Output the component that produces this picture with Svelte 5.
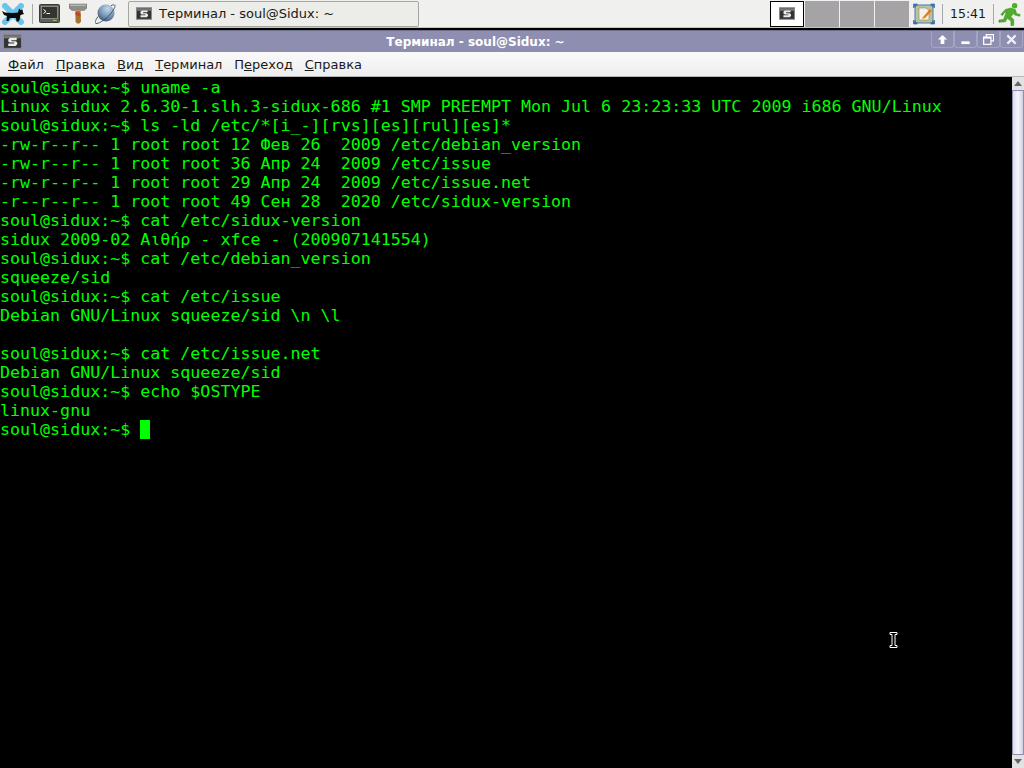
<script lang="ts">
  const menus = [
    { key: "Ф", rest: "айл" },
    { key: "П", rest: "равка" },
    { key: "В", rest: "ид" },
    { key: "Т", rest: "ерминал" },
    { pre: "П", key: "е", rest: "реход" },
    { key: "С", rest: "правка" },
  ];

  const lines = [
    "soul@sidux:~$ uname -a",
    "Linux sidux 2.6.30-1.slh.3-sidux-686 #1 SMP PREEMPT Mon Jul 6 23:23:33 UTC 2009 i686 GNU/Linux",
    "soul@sidux:~$ ls -ld /etc/*[i_-][rvs][es][rul][es]*",
    "-rw-r--r-- 1 root root 12 Фев 26  2009 /etc/debian_version",
    "-rw-r--r-- 1 root root 36 Апр 24  2009 /etc/issue",
    "-rw-r--r-- 1 root root 29 Апр 24  2009 /etc/issue.net",
    "-r--r--r-- 1 root root 49 Сен 28  2020 /etc/sidux-version",
    "soul@sidux:~$ cat /etc/sidux-version",
    "sidux 2009-02 Αιθήρ - xfce - (200907141554)",
    "soul@sidux:~$ cat /etc/debian_version",
    "squeeze/sid",
    "soul@sidux:~$ cat /etc/issue",
    "Debian GNU/Linux squeeze/sid \\n \\l",
    "",
    "soul@sidux:~$ cat /etc/issue.net",
    "Debian GNU/Linux squeeze/sid",
    "soul@sidux:~$ echo $OSTYPE",
    "linux-gnu",
  ];
</script>

{#snippet appIcon(cls)}
  <svg class={cls} viewBox="0 0 18 14">
    <rect x="0.5" y="0.5" width="17" height="13" fill="#333" stroke="#8a8a8a" />
    <rect x="1" y="1" width="16" height="3" fill="#777" />
    <path d="M13 3.500H6.500L5 5V7l1.500 1H10.500V9H5v2.200h7l1.500-1.500V8L12 6.800H8V5.700h5z" fill="#ececec" />
  </svg>
{/snippet}

<div class="desktop">
  <header class="panel">
    <div class="launchers">
      <svg class="logo" viewBox="0 0 22 22">
        <path d="M3 3l16 16M19 3L3 19" stroke="#6cc4ee" stroke-width="6" stroke-linecap="round" />
        <path d="M0 8l3 1.500 8 .5 5-.5 1-4 1.500 1.500 2-.5.500 3 1 1.500-3.500 1-1 5-1 1.500h-2l-.5-3.500H8L6.500 18H4.500L5 13l-3-1z" fill="#0a0a0a" />
      </svg>
      <span class="sep"></span>
      <svg class="ico term-ico" viewBox="0 0 21 21">
        <rect x="0.500" y="1.500" width="20" height="18" rx="1" fill="#5d605c" stroke="#3a3b38" />
        <rect x="2.500" y="3.500" width="16" height="12" fill="#33352f" stroke="#a6a8a2" stroke-width="0.700" />
        <path d="M4.500 6.500l2.500 2-2.500 2" stroke="#fff" fill="none" />
        <rect x="7.500" y="10" width="3.500" height="1" fill="#fff" />
        <rect x="14" y="17" width="3.500" height="1" fill="#8ecb4a" />
      </svg>
      <svg class="ico hammer" viewBox="0 0 18 21">
        <path d="M0 1h18v4l-3 2.500h-3.500L11 7H7l-.5.5H3L0 5z" fill="#8e8e8a" stroke="#6a6a66" stroke-width="0.500" />
        <path d="M1 1.700h16v1H1z" fill="#c8c8c4" />
        <path d="M6.500 7.500h5l.5 11-1.500 2h-2.500l-1.500-2z" fill="#a8722e" />
        <path d="M6.500 9l5 1.500v3l-5-1.500z" fill="#c8402c" />
      </svg>
      <svg class="ico planet" viewBox="0 0 21 21">
        <defs>
          <radialGradient id="pl" cx="0.6" cy="0.25" r="0.85">
            <stop offset="0" stop-color="#c6d8e8" />
            <stop offset="0.55" stop-color="#7596b8" />
            <stop offset="1" stop-color="#34485e" />
          </radialGradient>
        </defs>
        <circle cx="11" cy="10" r="8.500" fill="url(#pl)" />
        <path d="M3 13.500C0 18-.5 20 1 20.500c2 .5 8-3 12-7s7.500-9 7-11c-.3-1-2-1-4 .2" fill="none" stroke="#3c4a58" stroke-width="0.900" />
      </svg>
    </div>

    <div class="task">
      {@render appIcon("task-icon")}
      <span>Терминал - soul@Sidux: ~</span>
    </div>

    <div class="tray">
      <div class="pager">
        <div class="desk active">{@render appIcon("pager-icon")}</div>
        <div class="desk"></div>
        <div class="desk"></div>
        <div class="desk"></div>
      </div>
      <svg class="notes" viewBox="0 0 22 22">
        <rect x="2" y="2" width="18" height="18" rx="3" fill="#b9c39a" stroke="#4a78b0" />
        <path d="M0.500 5V1h4zM21.500 5V1h-4zM0.500 17v4h4zM21.500 17v4h-4z" fill="#3f78b8" stroke="#2a5a98" stroke-width="0.600" />
        <path d="M6 5h7l3 3v9H6z" fill="#f4f2e6" stroke="#777" stroke-width="0.500" />
        <path d="M10 14l7-8 2 2-7 7-3 1z" fill="#ee7d10" />
      </svg>
      <span class="sep"></span>
      <span class="clock">15:41</span>
      <span class="sep"></span>
      <svg class="runner" viewBox="0 0 26 26">
        <circle cx="18" cy="4" r="3" fill="#4fae2a" />
        <path d="M8 8l6-1.500 5 2 1 4 4 1-.5 2-5.500-1.500-1-2-3 4 3 3v6.500h-3v-5l-4-3-2 4-7 .5v-2.500l5-.5 3-8-2 .5-2 3-2-1z" fill="#4fae2a" stroke="#2f7d16" stroke-width="0.500" />
      </svg>
    </div>
  </header>

  <section class="window">
    <div class="titlebar">
      {@render appIcon("title-icon")}
      <div class="title">Терминал - soul@Sidux: ~</div>
      <div class="buttons">
        <button aria-label="shade">
          <svg viewBox="0 0 12 12"><path d="M6 1l5 5H8v5H4V6H1z" fill="#fff" /></svg>
        </button>
        <button aria-label="minimize">
          <svg viewBox="0 0 12 12"><rect x="1.500" y="8" width="9" height="3" fill="#fff" /></svg>
        </button>
        <button aria-label="maximize">
          <svg viewBox="0 0 12 12">
            <path d="M3.500 3.500V.7h8v6.800H8.500" fill="none" stroke="#fff" stroke-width="1.300" />
            <rect x="0.700" y="3.500" width="8" height="7.800" fill="none" stroke="#fff" stroke-width="1.300" />
            <rect x="0" y="3" width="9" height="2" fill="#fff" />
          </svg>
        </button>
        <button aria-label="close">
          <svg viewBox="0 0 12 12"><path d="M1.500 1.500l9 9M10.500 1.500l-9 9" stroke="#f0f0f6" stroke-width="2.400" /></svg>
        </button>
      </div>
    </div>

    <nav class="menubar">
      {#each menus as m}
        <span class="menu">{m.pre ?? ""}<u>{m.key}</u>{m.rest}</span>
      {/each}
    </nav>

    <div class="content">
      <pre class="term">{#each lines as line}<div class="line">{line}</div>{/each}<div class="line">soul@sidux:~$ <span class="cursor"> </span></div></pre>
      <aside class="scrollbar">
        <div class="arrow"><svg viewBox="0 0 10 6"><path d="M5 0l5 6H0z" fill="#66666a" /></svg></div>
        <div class="thumb"></div>
        <div class="arrow"><svg viewBox="0 0 10 6"><path d="M0 0h10L5 6z" fill="#66666a" /></svg></div>
      </aside>
      <svg class="ibeam" viewBox="0 0 9 16">
        <path d="M1 .5h7v2H6v11h2v2H1v-2h2V2.500H1z" fill="#000" stroke="#fff" stroke-width="1" />
      </svg>
    </div>
  </section>
</div>

<style>
  :global(body) {
    margin: 0;
    background: #000;
  }

  .desktop {
    width: 1024px;
    height: 768px;
    overflow: hidden;
    display: flex;
    flex-direction: column;
    font-family: "DejaVu Sans", sans-serif;
  }

  .panel {
    height: 27px;
    flex-shrink: 0;
    display: flex;
    align-items: center;
    background: #f0f0ee;
    border-bottom: 1px solid #c4c4c4;
  }

  .launchers {
    width: 128px;
    display: flex;
    align-items: center;
    flex-shrink: 0;
  }

  .logo {
    width: 22px;
    height: 22px;
    margin-left: 2px;
  }

  .sep {
    width: 1px;
    height: 20px;
    background: #a8a8a8;
    flex-shrink: 0;
  }

  .launchers .sep {
    margin-left: 8px;
  }

  .ico {
    flex-shrink: 0;
  }

  .term-ico {
    width: 21px;
    height: 21px;
    margin-left: 6px;
  }

  .hammer {
    width: 18px;
    height: 21px;
    margin-left: 9px;
  }

  .planet {
    width: 21px;
    height: 21px;
    margin-left: 8px;
  }

  .task {
    width: 291px;
    height: 26px;
    display: flex;
    align-items: center;
    gap: 7px;
    padding-left: 7px;
    box-sizing: border-box;
    background: #ecece8;
    border: 1px solid #a6a6a0;
    border-radius: 2px;
    font-size: 13px;
    color: #1a1a1a;
  }

  .task-icon {
    width: 16px;
    height: 13px;
  }

  .tray {
    margin-left: auto;
    height: 27px;
    display: flex;
    align-items: center;
  }

  .pager {
    display: flex;
    gap: 1px;
    margin-right: 4px;
  }

  .desk {
    width: 34px;
    height: 26px;
    box-sizing: border-box;
    background: #a5a3a5;
    display: flex;
    align-items: center;
    justify-content: center;
  }

  .desk.active {
    background: #fff;
    border: 1px solid #000;
  }

  .pager-icon {
    width: 16px;
    height: 13px;
  }

  .notes {
    width: 22px;
    height: 22px;
    margin-right: 7px;
  }

  .clock {
    width: 50px;
    text-align: center;
    font-size: 12.5px;
    color: #1a1a1a;
  }

  .runner {
    width: 24px;
    height: 24px;
    margin: 0 2px 0 4px;
  }

  .window {
    flex: 1;
    min-height: 0;
    display: flex;
    flex-direction: column;
  }

  .titlebar {
    height: 21px;
    margin-top: 2px;
    flex-shrink: 0;
    display: flex;
    align-items: center;
    background: #8e8fb0;
    border-top: 1px solid #6d6e8a;
  }

  .title-icon {
    width: 19px;
    height: 15px;
    margin-left: 3px;
    flex-shrink: 0;
  }

  .title {
    flex: 1;
    text-align: center;
    color: #fff;
    font-size: 12px;
    font-weight: 700;
    margin-right: 2px;
  }

  .buttons {
    display: flex;
    align-self: flex-start;
    margin-right: 1px;
  }

  button {
    width: 23px;
    height: 17px;
    padding: 0;
    display: flex;
    align-items: center;
    justify-content: center;
    background: #8e8fb0;
    border: 1px solid #a4a5c2;
    border-top: 0;
    border-radius: 0 0 3px 3px;
  }

  button svg {
    width: 11px;
    height: 11px;
  }

  .menubar {
    height: 24px;
    flex-shrink: 0;
    display: flex;
    align-items: center;
    padding-left: 8px;
    gap: 11.8px;
    background: linear-gradient(#fafafa, #eeeeee);
    border-bottom: 1px solid #b8b8b8;
    font-size: 13px;
    color: #1a1a1a;
  }

  .content {
    flex: 1;
    min-height: 0;
    display: flex;
    position: relative;
    background: #000;
  }

  .term {
    flex: 1;
    margin: 0;
    padding-top: 1px;
    font-family: "DejaVu Sans Mono", monospace;
    font-size: 16.65px;
    line-height: 19px;
    color: #00ff00;
    overflow: hidden;
  }

  .line {
    height: 19px;
    white-space: pre;
  }

  .cursor {
    display: inline-block;
    width: 10px;
    height: 19px;
    vertical-align: top;
    background: #00ff00;
  }

  .scrollbar {
    width: 12px;
    flex-shrink: 0;
    display: flex;
    flex-direction: column;
    background: #d8d8d8;
  }

  .arrow {
    height: 13px;
    flex-shrink: 0;
    display: flex;
    align-items: center;
    justify-content: center;
    background: #e2e2e2;
  }

  .arrow svg {
    width: 8px;
    height: 5px;
  }

  .thumb {
    flex: 1;
    background: linear-gradient(90deg, #dcdcec, #f6f6fa 50%, #d0d0e2);
    border: 1px solid #8e8fb0;
  }

  .ibeam {
    position: absolute;
    left: 889px;
    top: 555px;
    width: 9px;
    height: 16px;
  }
</style>
